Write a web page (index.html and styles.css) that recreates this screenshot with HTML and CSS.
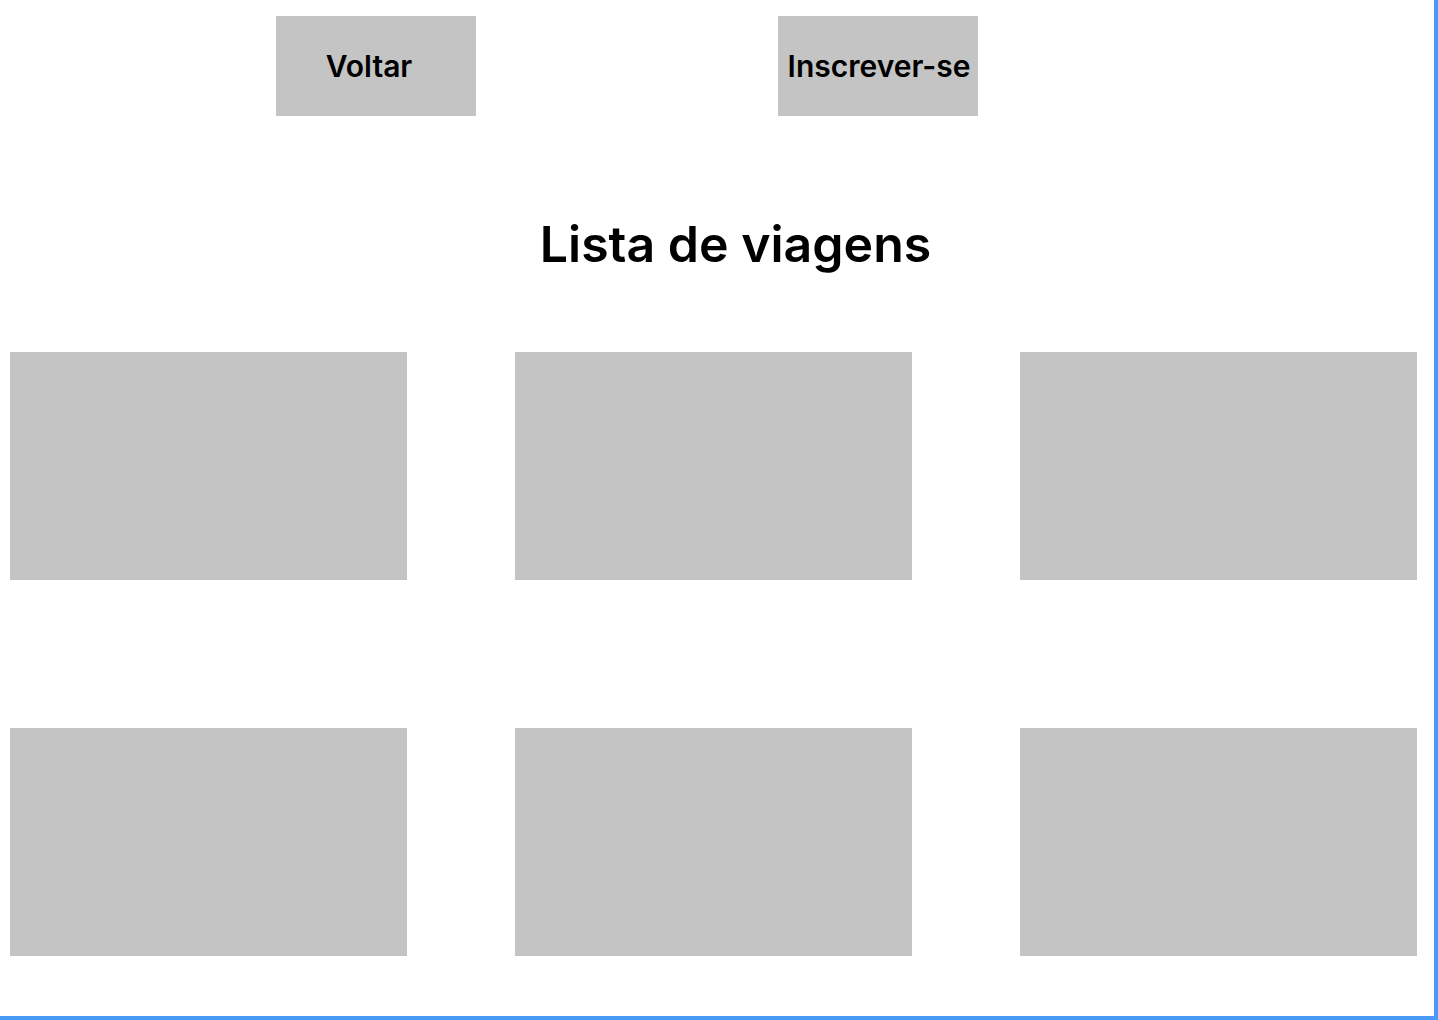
FILE: index.html
```html
<!DOCTYPE html>
<html lang="en">
<head>
    <meta charset="UTF-8">
    <meta name="viewport" content="width=device-width, initial-scale=1.0">
    <title>Lista de viagens</title>
    <link rel="stylesheet" href="styles.css">
</head>
<body>
    <div class="frame">
        <div class="top-bar">
            <button class="btn btn-back">Voltar</button>
            <button class="btn btn-signup">Inscrever-se</button>
        </div>
        <h1 class="title">Lista de viagens</h1>
        <div class="trips">
            <div class="trip"></div>
            <div class="trip"></div>
            <div class="trip"></div>
            <div class="trip"></div>
            <div class="trip"></div>
            <div class="trip"></div>
        </div>
    </div>
</body>
</html>
```

FILE: styles.css
```css
body {
    margin: 0;
    background-color: #ffffff;
    font-family: Inter, "Noto Sans", sans-serif;
    color: #000000;
}
.frame {
    width: 1434px;
    height: 1016px;
    border-right: 4px solid #4a9bf7;
    border-bottom: 4px solid #4a9bf7;
    overflow: hidden;
}
.top-bar {
    display: flex;
    padding-top: 16px;
    padding-left: 276px;
    gap: 302px;
}
.btn {
    width: 200px;
    height: 100px;
    border: none;
    padding: 0;
    background-color: #c4c4c4;
    font-family: inherit;
    font-size: 30px;
    font-weight: 600;
    color: #000000;
    display: flex;
    align-items: center;
    justify-content: center;
    white-space: nowrap;
}
.btn-back {
    padding-right: 14px; /* label sits a bit left in the mockup */
}
.btn-signup {
    padding-left: 2px;
}
.title {
    margin: 103px 0 0 0;
    padding-left: 37px;
    text-align: center;
    font-size: 50px;
    font-weight: 600;
    line-height: 1;
}
.trips {
    display: grid;
    grid-template-columns: repeat(3, 397px);
    column-gap: 108px;
    row-gap: 148px;
    margin-top: 83px;
    padding-left: 10px;
}
.trip {
    height: 228px;
    background-color: #c4c4c4;
}
```
